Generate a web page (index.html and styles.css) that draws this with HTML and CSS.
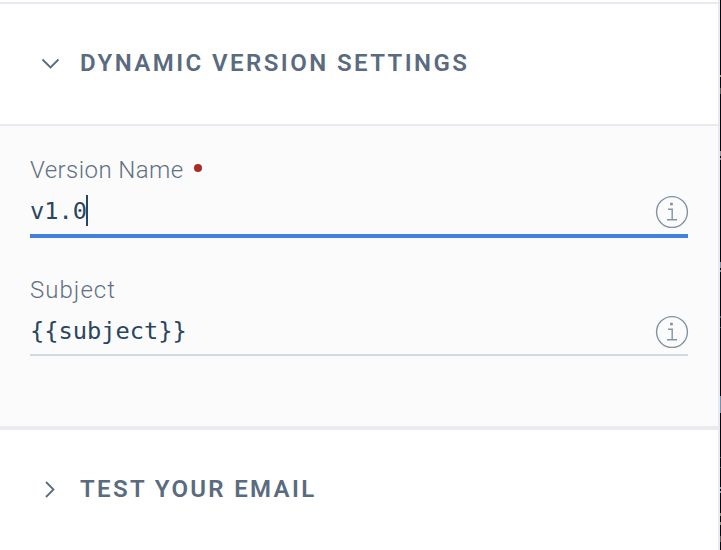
FILE: index.html
```html
<!DOCTYPE html>
<html lang="en">
<head>
<meta charset="utf-8">
<title>Dynamic Version Settings</title>
<link rel="stylesheet" href="styles.css">
</head>
<body>
<div class="workspace">
  <main class="panel">
    <section class="accordion">
      <h2 class="accordion-header">
        <svg class="chevron" viewBox="0 0 20 20"><path d="M2.5 5.5 10.5 13.5 18.5 5.5"/></svg>
        <span class="title settings-title">DYNAMIC VERSION SETTINGS</span>
      </h2>
      <div class="accordion-body">
        <div class="field focused">
          <label class="label"><span class="name-label">Version Name</span><i class="required"></i></label>
          <div class="control">
            <span class="value">v1.0</span><i class="caret"></i>
            <svg class="info" viewBox="0 0 34 34"><circle cx="17" cy="17" r="15.4"/><path d="M13 14.2h4.2v10.5M12 24.8h10"/><circle class="dot" cx="16.5" cy="9" r="1.6"/></svg>
          </div>
        </div>
        <div class="field">
          <label class="label"><span class="subject-label">Subject</span></label>
          <div class="control">
            <span class="value">{{subject}}</span>
            <svg class="info" viewBox="0 0 34 34"><circle cx="17" cy="17" r="15.4"/><path d="M13 14.2h4.2v10.5M12 24.8h10"/><circle class="dot" cx="16.5" cy="9" r="1.6"/></svg>
          </div>
        </div>
      </div>
    </section>
    <section class="accordion-header last">
      <svg class="chevron" viewBox="0 0 20 20"><path d="M6 2 13.5 9.5 6 17"/></svg>
      <span class="title email-title">TEST YOUR EMAIL</span>
    </section>
  </main>
  <aside class="preview-edge"></aside>
</div>
</body>
</html>
```
FILE: styles.css
```css
* { box-sizing: border-box; }
body { margin: 0; background: #fff; font-family: Roboto, sans-serif; }
.workspace { display: flex; width: 721px; height: 550px; overflow: hidden; }
.panel { width: 720px; padding-top: 2px; border-right: 2px solid #e9eaf0; }
.accordion { border-top: 2px solid #e9eaf0; }
.accordion-header { display: flex; align-items: center; height: 120px; margin: 0; padding: 0 0 2px 40px; }
.chevron { width: 20px; height: 20px; margin: 2px 20px 0 0; fill: none; stroke: #5a6b80; stroke-width: 1.8; }
.title { color: #5a6b80; font-size: 24px; line-height: 30px; font-weight: 600; white-space: nowrap; }
.settings-title { letter-spacing: 2.43px; }
.email-title { letter-spacing: 2.32px; }
.accordion-body { height: 306px; padding: 28px 30px 0; border-top: 2px solid #e9eaf0; border-bottom: 4px solid #e9ebee; background: #fbfbfb; }
.field { height: 120px; }
.label { display: flex; align-items: center; height: 32px; color: #627083; font-size: 24px; line-height: 32px; font-weight: 300; }
.name-label { letter-spacing: .43px; }
.subject-label { letter-spacing: 1.05px; }
.required { width: 8px; height: 8px; margin: -4px 0 0 10px; border-radius: 50%; background: #ac2925; }
.control { display: flex; align-items: center; height: 50px; padding-bottom: 2px; border-bottom: 2px solid #d3d9df; }
.focused .control { height: 52px; border-bottom: 4px solid #4382dc; }
.value { margin-top: 4px; color: #294661; font-family: "DejaVu Sans Mono", monospace; font-size: 23.7px; line-height: 32px; }
.caret { width: 2px; height: 31px; margin: 3px 0 0 -1px; background: #294661; }
.info { width: 34px; height: 34px; margin: 6px -1px 0 auto; fill: none; stroke: #8294a5; stroke-width: 1.4; }
.info .dot { fill: #8294a5; stroke: none; }
.last { height: 120px; }
.preview-edge { width: 1px; background: linear-gradient(#02080f 0 75px, #a09e80 75px 77px, #02080f 77px 88px, #55564c 88px 94px, #02080f 94px 151px, #8c9097 151px 156px, #02080f 156px 158px, #8c9097 158px 160px, #02080f 160px 262px, #7690a8 262px 268px, #02080f 268px 270px, #7690a8 270px 272px, #02080f 272px 316px, #3c5566 316px 318px, #02080f 318px 327px, #3c5566 327px 328px, #02080f 328px 396px, #6b91b9 396px 413px, #02080f 413px 457px, #40535c 457px 458px, #02080f 458px 467px, #40535c 467px 468px, #02080f 468px 487px, #7b9dbd 487px 489px, #02080f 489px 491px, #7b9dbd 491px 493px, #02080f 493px 513px, #8d8e6c 513px 516px, #02080f 516px 522px, #8d8e6c 522px 525px, #02080f 525px 536px, #55554b 536px 542px, #02080f 542px); }
```
